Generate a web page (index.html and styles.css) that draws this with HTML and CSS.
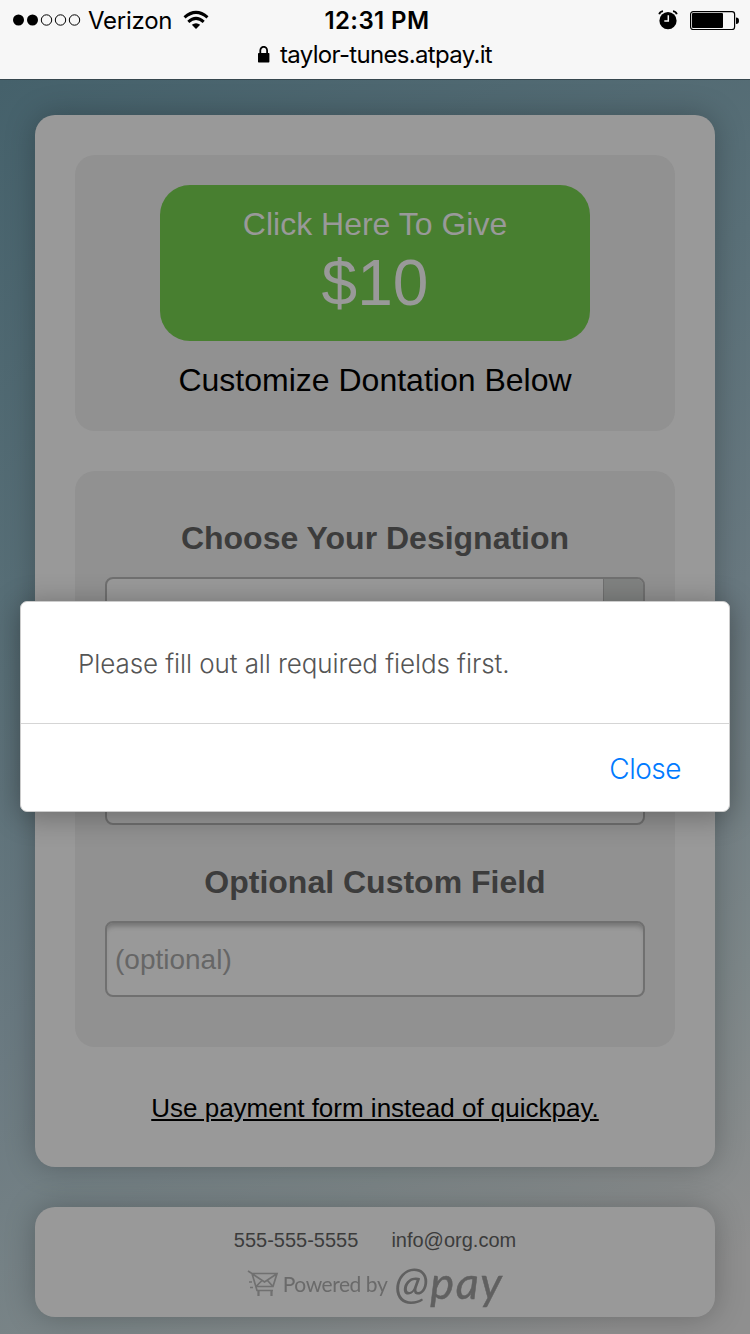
FILE: index.html
```html
<!DOCTYPE html>
<html lang="en">
<head>
<meta charset="utf-8">
<title>Donation</title>
<link rel="stylesheet" href="styles.css">
</head>
<body>
<header class="bar">
  <div class="status">
    <div class="status-left">
      <svg class="signal" width="68" height="12" viewBox="0 0 68 12"><circle cx="5.5" cy="6" r="5.5"/><circle cx="19.5" cy="6" r="5.5"/><g fill="none" stroke="#000" stroke-width="1"><circle cx="33.5" cy="6" r="5.2"/><circle cx="47.5" cy="6" r="5.2"/><circle cx="61.5" cy="6" r="5.2"/></g></svg>
      <span class="carrier">Verizon</span>
      <svg class="wifi" width="26" height="20" viewBox="0 0 26 20"><g fill="none" stroke="#000" stroke-width="3"><path d="M1.5 7.4Q13-2.6 24.5 7.4"/><path d="M5.3 11.8Q13 5 20.7 11.8"/></g><path d="M8.8 14.8Q13 11.6 17.2 14.8L13 19Z"/></svg>
    </div>
    <span class="time">12:31 PM</span>
    <div class="status-right">
      <svg class="alarm" width="20" height="20" viewBox="0 0 20 20"><circle cx="10" cy="10.7" r="8.6"/><path d="M1.2 4.3Q2 1.500 5 1.100M15 1.100Q18 1.500 18.800 4.300" fill="none" stroke="#000" stroke-width="1.8"/><path d="M10.300 5.200V11H6.300" fill="none" stroke="#f7f7f7" stroke-width="1.5"/></svg>
      <svg class="battery" width="49" height="20" viewBox="0 0 49 20"><rect x=".6" y="1.6" width="44" height="18" rx="2.6" fill="none" stroke="#000" stroke-width="1.2"/><rect x="2" y="3.1" width="31" height="15" rx="1"/><path d="M46 7.500q3 0 3 3.200t-3 3.200z"/></svg>
    </div>
  </div>
  <div class="address">
    <svg width="12" height="17" viewBox="0 0 12 17"><rect y="7" width="11.4" height="9.5" rx=".7"/><path d="M2.3 8V4.600a3.400 3.800 0 0 1 6.800 0V8" fill="none" stroke="#000" stroke-width="1.8"/></svg>
    <span class="url">taylor-tunes.atpay.it</span>
  </div>
</header>
<main class="page">
  <section class="card form-card">
    <div class="panel give">
      <div class="give-button"><span class="give-label">Click Here To Give</span><span class="give-amount">$10</span></div>
      <p class="customize">Customize Dontation Below</p>
    </div>
    <div class="panel fields">
      <h2 class="label">Choose Your Designation</h2>
      <div class="field select"><span class="select-arrow"></span></div>
      <div class="field covered"></div>
      <h2 class="label">Optional Custom Field</h2>
      <div class="field input">(optional)</div>
    </div>
    <a class="switch">Use payment form instead of quickpay.</a>
  </section>
  <footer class="card footer">
    <div class="contact"><span>555-555-5555</span><span>info@org.com</span></div>
    <div class="brand">
      <svg class="cart" width="32" height="30" viewBox="0 0 32 30" fill="none" stroke="#707070" stroke-width="1.7"><path d="M1 2L5 4.500L10 21.500H26M5 4.500H30L26 17.500H9M5.500 5L17.500 13L29.500 5M9.500 17L15 11.500M25.500 17L20.500 11.500M2 13H5M3 18.500H6"/><path d="M11.500 22V27M24.500 22V27" stroke-width="2.2"/></svg>
      <span class="powered">Powered by</span>
      <span class="atpay"><span class="at">@</span>pay</span>
    </div>
  </footer>
</main>
<div class="dialog" role="dialog">
  <div class="message">Please fill out all required fields first.</div>
  <div class="actions"><span class="close">Close</span></div>
</div>
</body>
</html>
```
FILE: styles.css
```css
* { box-sizing: border-box; }
body {
  margin: 0;
  width: 750px;
  height: 1334px;
  overflow: hidden;
  position: relative;
  font-family: "Liberation Sans", Arial, sans-serif;
  color: #000;
  background: #69777c;
}
.bar {
  height: 80px;
  background: #f7f7f7;
  border-bottom: 1px solid #36474e;
  font-family: Inter, sans-serif;
  font-size: 24px;
}
.status {
  display: grid;
  grid-template-columns: 1fr auto 1fr;
  height: 40px;
  padding: 0 11px 0 13px;
  align-items: center;
}
.status-left, .status-right { display: flex; align-items: center; }
.status-right { justify-content: flex-end; gap: 12px; }
.carrier { margin-left: 7px; letter-spacing: -0.25px; }
.wifi { margin-left: 11px; }
.time { font-weight: 600; letter-spacing: 0.4px; padding: 1px 0 0 2px; }
.address {
  display: flex;
  justify-content: center;
  align-items: center;
  gap: 10px;
  height: 28px;
}
.url { letter-spacing: -0.68px; }
.page {
  height: 1254px;
  padding: 35px 35px 0;
  background: linear-gradient(149deg, #45616b 0%, #5a7078 35%, #6b7a81 58%, #7c8688 78%, #8f8f8f 95%);
}
.card {
  border-radius: 20px;
  background: #999;
  box-shadow: 0 0 30px rgba(0, 0, 0, .25);
}
.form-card {
  height: 1052px;
  padding: 40px;
  display: flex;
  flex-direction: column;
}
.panel { border-radius: 20px; background: #919191; }
.give {
  height: 276px;
  padding: 30px;
  display: flex;
  flex-direction: column;
  align-items: center;
}
.give-button {
  width: 430px;
  height: 156px;
  padding-top: 20px;
  border-radius: 30px;
  background: #487f30;
  color: #999;
  display: flex;
  flex-direction: column;
  align-items: center;
}
.give-label { font-size: 32px; line-height: 38px; }
.give-amount { font-size: 64px; line-height: 80px; }
.customize { margin: 20px 0 0; font-size: 32px; line-height: 38px; }
.fields { height: 576px; margin-top: 40px; padding: 48px 30px 0; }
.label {
  margin: 0 0 20px;
  font-size: 32px;
  line-height: 38px;
  text-align: center;
  color: #3c3c3c;
}
.field {
  height: 76px;
  border: 2px solid #707070;
  border-radius: 8px;
  background: #999;
}
.select { display: flex; justify-content: flex-end; overflow: hidden; }
.select-arrow { width: 40px; border-left: 1px solid #707070; background: #808281; }
.covered { margin: 96px 0 38px; }
.input {
  padding-left: 8px;
  font-size: 28px;
  line-height: 74px;
  color: #666;
  box-shadow: inset 0 6px 5px -3px rgba(0, 0, 0, .25);
}
.switch {
  margin-top: 46px;
  font-size: 26px;
  line-height: 30px;
  text-align: center;
  text-decoration: underline;
}
.footer { height: 110px; margin-top: 40px; padding-top: 21px; }
.contact {
  display: flex;
  justify-content: center;
  gap: 33px;
  font-size: 20px;
  line-height: 24px;
  color: #3c3c3c;
}
.brand {
  display: flex;
  align-items: center;
  justify-content: center;
  height: 44px;
  margin-top: 10px;
  font-family: Lato, sans-serif;
  color: #6a6a6a;
  filter: blur(.7px);
}
.powered { margin-left: 4px; font-size: 21px; line-height: 24px; letter-spacing: -0.45px; }
.atpay {
  margin: -4px 0 0 7px;
  font-size: 45px;
  line-height: 44px;
  font-style: italic;
  letter-spacing: 1.5px;
  color: #606060;
  -webkit-text-stroke: .5px #606060;
}
.at { -webkit-text-stroke: 0; }
.dialog {
  position: absolute;
  left: 20px;
  top: 601px;
  width: 710px;
  height: 211px;
  border: 1px solid #ccc;
  border-radius: 7px;
  background: #fff;
  box-shadow: 0 4px 30px rgba(0, 0, 0, .32);
  font-family: Inter, sans-serif;
  font-weight: 300;
}
.message {
  height: 122px;
  padding: 46px 57px 0;
  border-bottom: 1px solid #d5d5d5;
  font-size: 26px;
  line-height: 32px;
  letter-spacing: -0.09px;
  color: #555;
}
.actions {
  display: flex;
  justify-content: flex-end;
  padding: 28px 48px 0;
  font-size: 28px;
  line-height: 34px;
  letter-spacing: -0.5px;
  color: #007aff;
}
```
